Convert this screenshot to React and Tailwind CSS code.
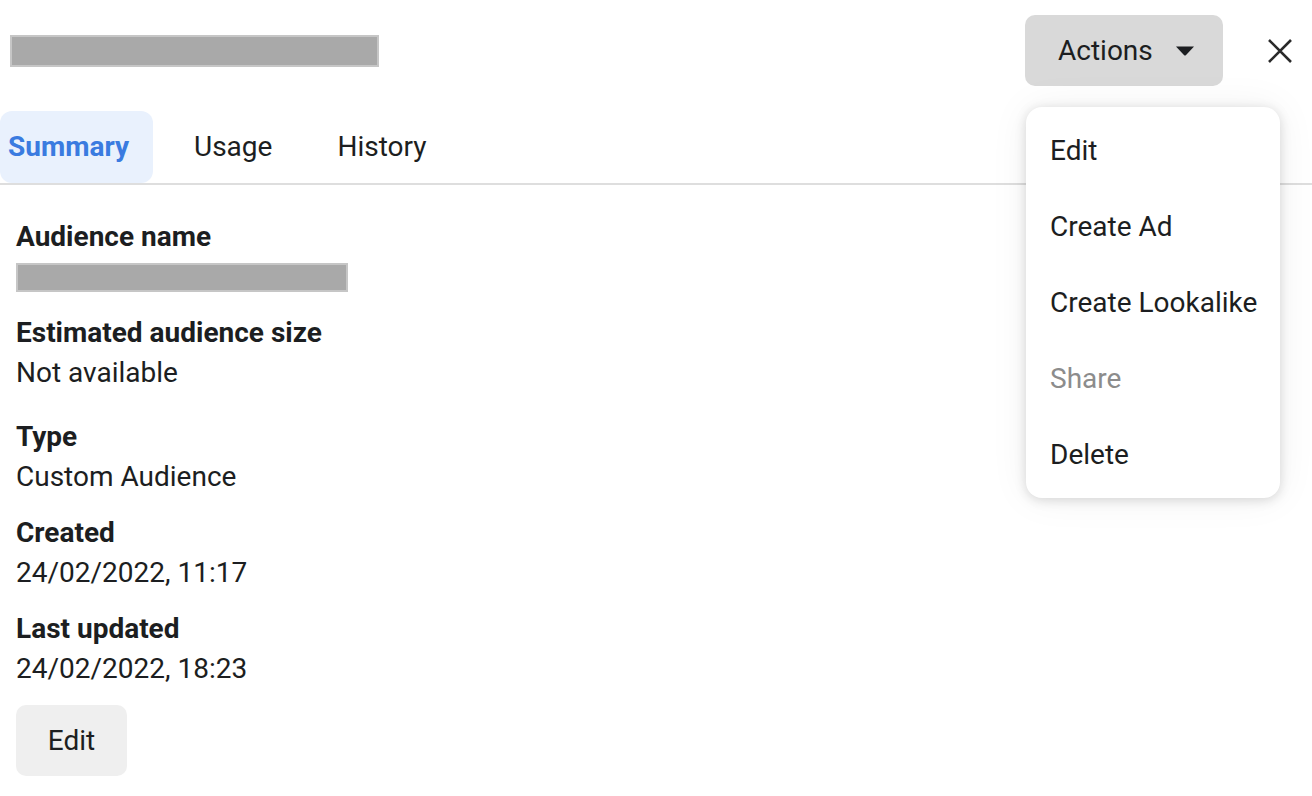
const Field = ({ label, value, className = '' }) => (
    <div className={className}>
        <p className="font-bold leading-[40px]">{label}</p>
        <p className="leading-[40px]">{value}</p>
    </div>
);

const App = () => {
    const menuItems = [
        { label: 'Edit' },
        { label: 'Create Ad' },
        { label: 'Create Lookalike' },
        { label: 'Share', disabled: true },
        { label: 'Delete' },
    ];

    return (
        <div className="relative w-[1312px] h-[796px] overflow-hidden bg-white text-[28px] text-[#1c1e21] font-['Roboto',sans-serif]">
            {/* Header */}
            <div className="flex items-center justify-between pt-[15px] pl-[10px] pr-[20px]">
                <div className="w-[369px] h-[32px] bg-[#a9a9a9] border-2 border-[#c6c6c6]" />
                <div className="flex items-center gap-[45px]">
                    <button className="flex items-center w-[198px] h-[71px] pl-[33px] rounded-[10px] bg-[#d9d9d9]">
                        <span>Actions</span>
                        <svg className="ml-[22px] w-[20px] h-[10px]" viewBox="0 0 20 10">
                            <path d="M1 0.5h18L10.8 9.2a1.2 1.2 0 0 1-1.6 0z" fill="#1c1e21" />
                        </svg>
                    </button>
                    <svg className="w-[24px] h-[24px]" viewBox="0 0 24 24" fill="none" stroke="#2a2a2a" strokeWidth="2.6">
                        <path d="M1 1l22 22M23 1L1 23" />
                    </svg>
                </div>
            </div>

            {/* Tabs */}
            <div className="flex items-end gap-[17px] mt-[25px] border-b-2 border-[#dedede]">
                <div className="h-[72px] flex items-center pl-[8px] pr-[24px] rounded-[12px] bg-[#e9f1fd] text-[#3a7be0] font-bold">
                    Summary
                </div>
                <div className="h-[72px] flex items-center px-[24px]">Usage</div>
                <div className="h-[72px] flex items-center px-[24px]">History</div>
            </div>

            {/* Summary content */}
            <div className="pl-[16px] pt-[32px]">
                <p className="font-bold leading-[40px]">Audience name</p>
                <div className="mt-[6px] w-[332px] h-[29px] bg-[#a9a9a9] border-2 border-[#c6c6c6]" />
                <Field className="mt-[21px]" label="Estimated audience size" value="Not available" />
                <Field className="mt-[24px]" label="Type" value="Custom Audience" />
                <Field className="mt-[16px]" label="Created" value="24/02/2022, 11:17" />
                <Field className="mt-[16px]" label="Last updated" value="24/02/2022, 18:23" />
                <button className="mt-[16px] w-[111px] h-[71px] rounded-[10px] bg-[#efefef]">Edit</button>
            </div>

            {/* Actions dropdown */}
            <div className="absolute left-[1026px] top-[107px] w-[254px] pt-[6px] pb-[5px] rounded-[16px] bg-white shadow-[0_2px_12px_rgba(0,0,0,0.15),0_0_40px_rgba(0,0,0,0.06)]">
                {menuItems.map((item) => (
                    <div
                        key={item.label}
                        className={`h-[76px] flex items-center pl-[24px] ${item.disabled ? 'text-[#8c8c8c]' : ''}`}
                    >
                        {item.label}
                    </div>
                ))}
            </div>
        </div>
    );
};

export default App;
